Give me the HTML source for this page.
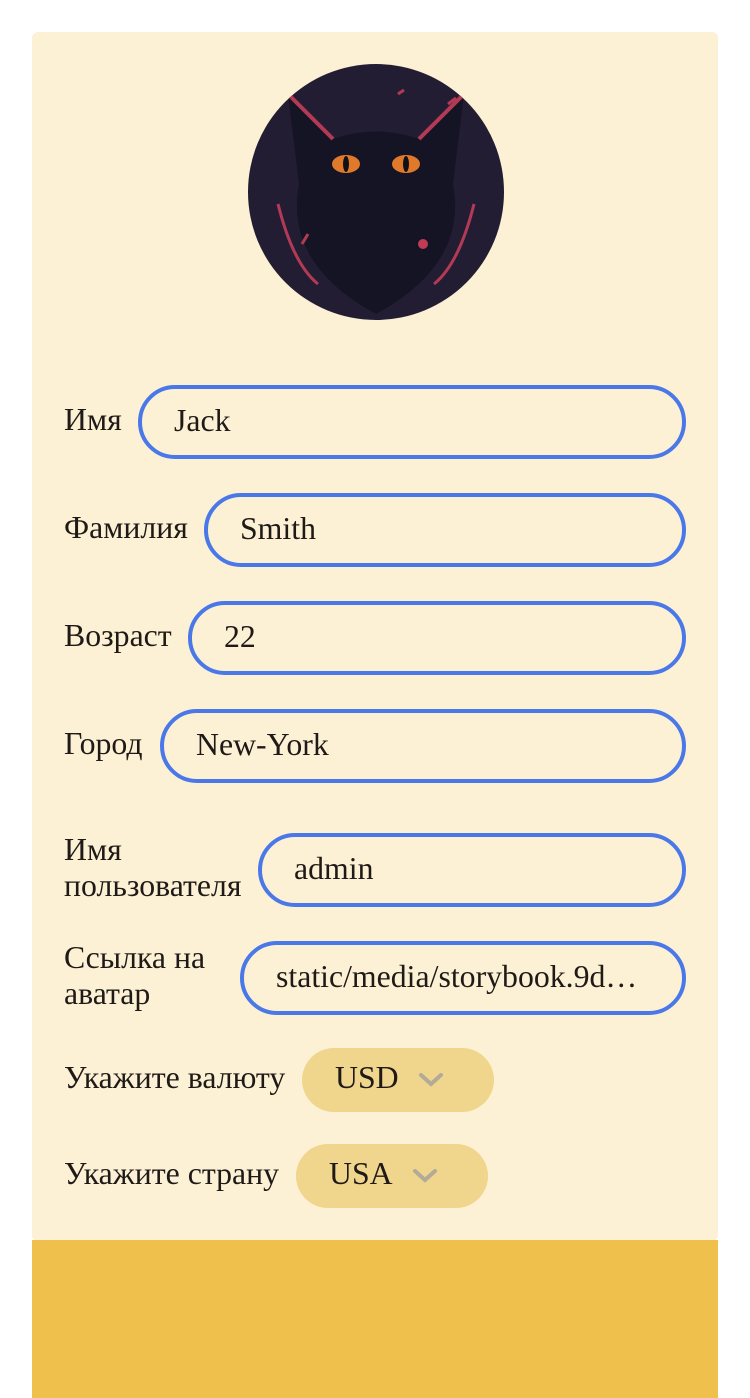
<!DOCTYPE html>
<html><head><meta charset="utf-8"><style>
body{margin:0;width:750px;height:1398px;background:#fff;position:relative;overflow:hidden;font-family:"Liberation Serif",serif;color:#1f1a17}
.card{position:absolute;left:32px;top:32px;width:686px;height:1208px;background:#fcf1d4;border-radius:6px 6px 4px 4px}
.bot{position:absolute;left:32px;top:1240px;width:686px;height:158px;background:#f0c04c}
.lbl{position:absolute;left:64px;font-size:31.8px;line-height:36px}
.inp{position:absolute;height:66px;border:4px solid #4a78e8;border-radius:38px;box-sizing:content-box;font-size:31.8px;line-height:64px;padding-left:32px;white-space:nowrap;overflow:hidden}
.sel{position:absolute;height:64px;width:192px;background:#f0d68c;border-radius:32px;font-size:31.8px;line-height:60px}
.sel span{position:absolute;left:33px}
.sel svg{position:absolute;left:116px;top:24px}
</style></head><body>
<div class="card"></div>
<div class="bot"></div>
<svg style="position:absolute;left:248px;top:64px" width="256" height="256" viewBox="0 0 256 256">
<defs><clipPath id="c"><circle cx="128" cy="128" r="128"/></clipPath></defs>
<circle cx="128" cy="128" r="128" fill="#231d33"/>
<g clip-path="url(#c)">
<path d="M40 30 L85 75 Q128 60 171 75 L216 30 L205 120 Q220 200 128 250 Q36 200 51 120 Z" fill="#141425"/>
<path d="M40 30 L85 75 M216 30 L171 75" stroke="#b33a55" stroke-width="4"/>
<path d="M30 140 Q45 200 70 220 M226 140 Q211 200 186 220 M200 40 l8 -6 M150 30 l6 -4 M60 170 l-6 10" stroke="#b33a55" stroke-width="3" fill="none"/>
<ellipse cx="98" cy="100" rx="14" ry="9" fill="#e07a2a"/>
<ellipse cx="158" cy="100" rx="14" ry="9" fill="#e07a2a"/>
<ellipse cx="98" cy="100" rx="3" ry="8" fill="#111"/>
<ellipse cx="158" cy="100" rx="3" ry="8" fill="#111"/>
<circle cx="175" cy="180" r="5" fill="#c23b55"/>
</g></svg>

<div class="lbl" style="top:402px">Имя</div>
<div class="inp" style="left:138px;top:385px;width:508px">Jack</div>
<div class="lbl" style="top:510px">Фамилия</div>
<div class="inp" style="left:204px;top:493px;width:442px">Smith</div>
<div class="lbl" style="top:618px">Возраст</div>
<div class="inp" style="left:188px;top:601px;width:458px">22</div>
<div class="lbl" style="top:726px">Город</div>
<div class="inp" style="left:160px;top:709px;width:486px">New-York</div>
<div class="lbl" style="top:832px">Имя<br>пользователя</div>
<div class="inp" style="left:258px;top:833px;width:388px">admin</div>
<div class="lbl" style="top:940px">Ссылка на<br>аватар</div>
<div class="inp" style="left:240px;top:941px;width:406px;text-overflow:ellipsis;padding-right:40px;width:366px">static/media/storybook.9d…</div>
<div class="lbl" style="top:1060px">Укажите валюту</div>
<div class="sel" style="left:302px;top:1048px"><span>USD</span><svg width="26" height="16" viewBox="0 0 26 16"><path d="M3 3 L13 12 L23 3" stroke="#b3ab98" stroke-width="4" fill="none" stroke-linecap="round"/></svg></div>
<div class="lbl" style="top:1156px">Укажите страну</div>
<div class="sel" style="left:296px;top:1144px"><span>USA</span><svg width="26" height="16" viewBox="0 0 26 16"><path d="M3 3 L13 12 L23 3" stroke="#b3ab98" stroke-width="4" fill="none" stroke-linecap="round"/></svg></div>
</body></html>
